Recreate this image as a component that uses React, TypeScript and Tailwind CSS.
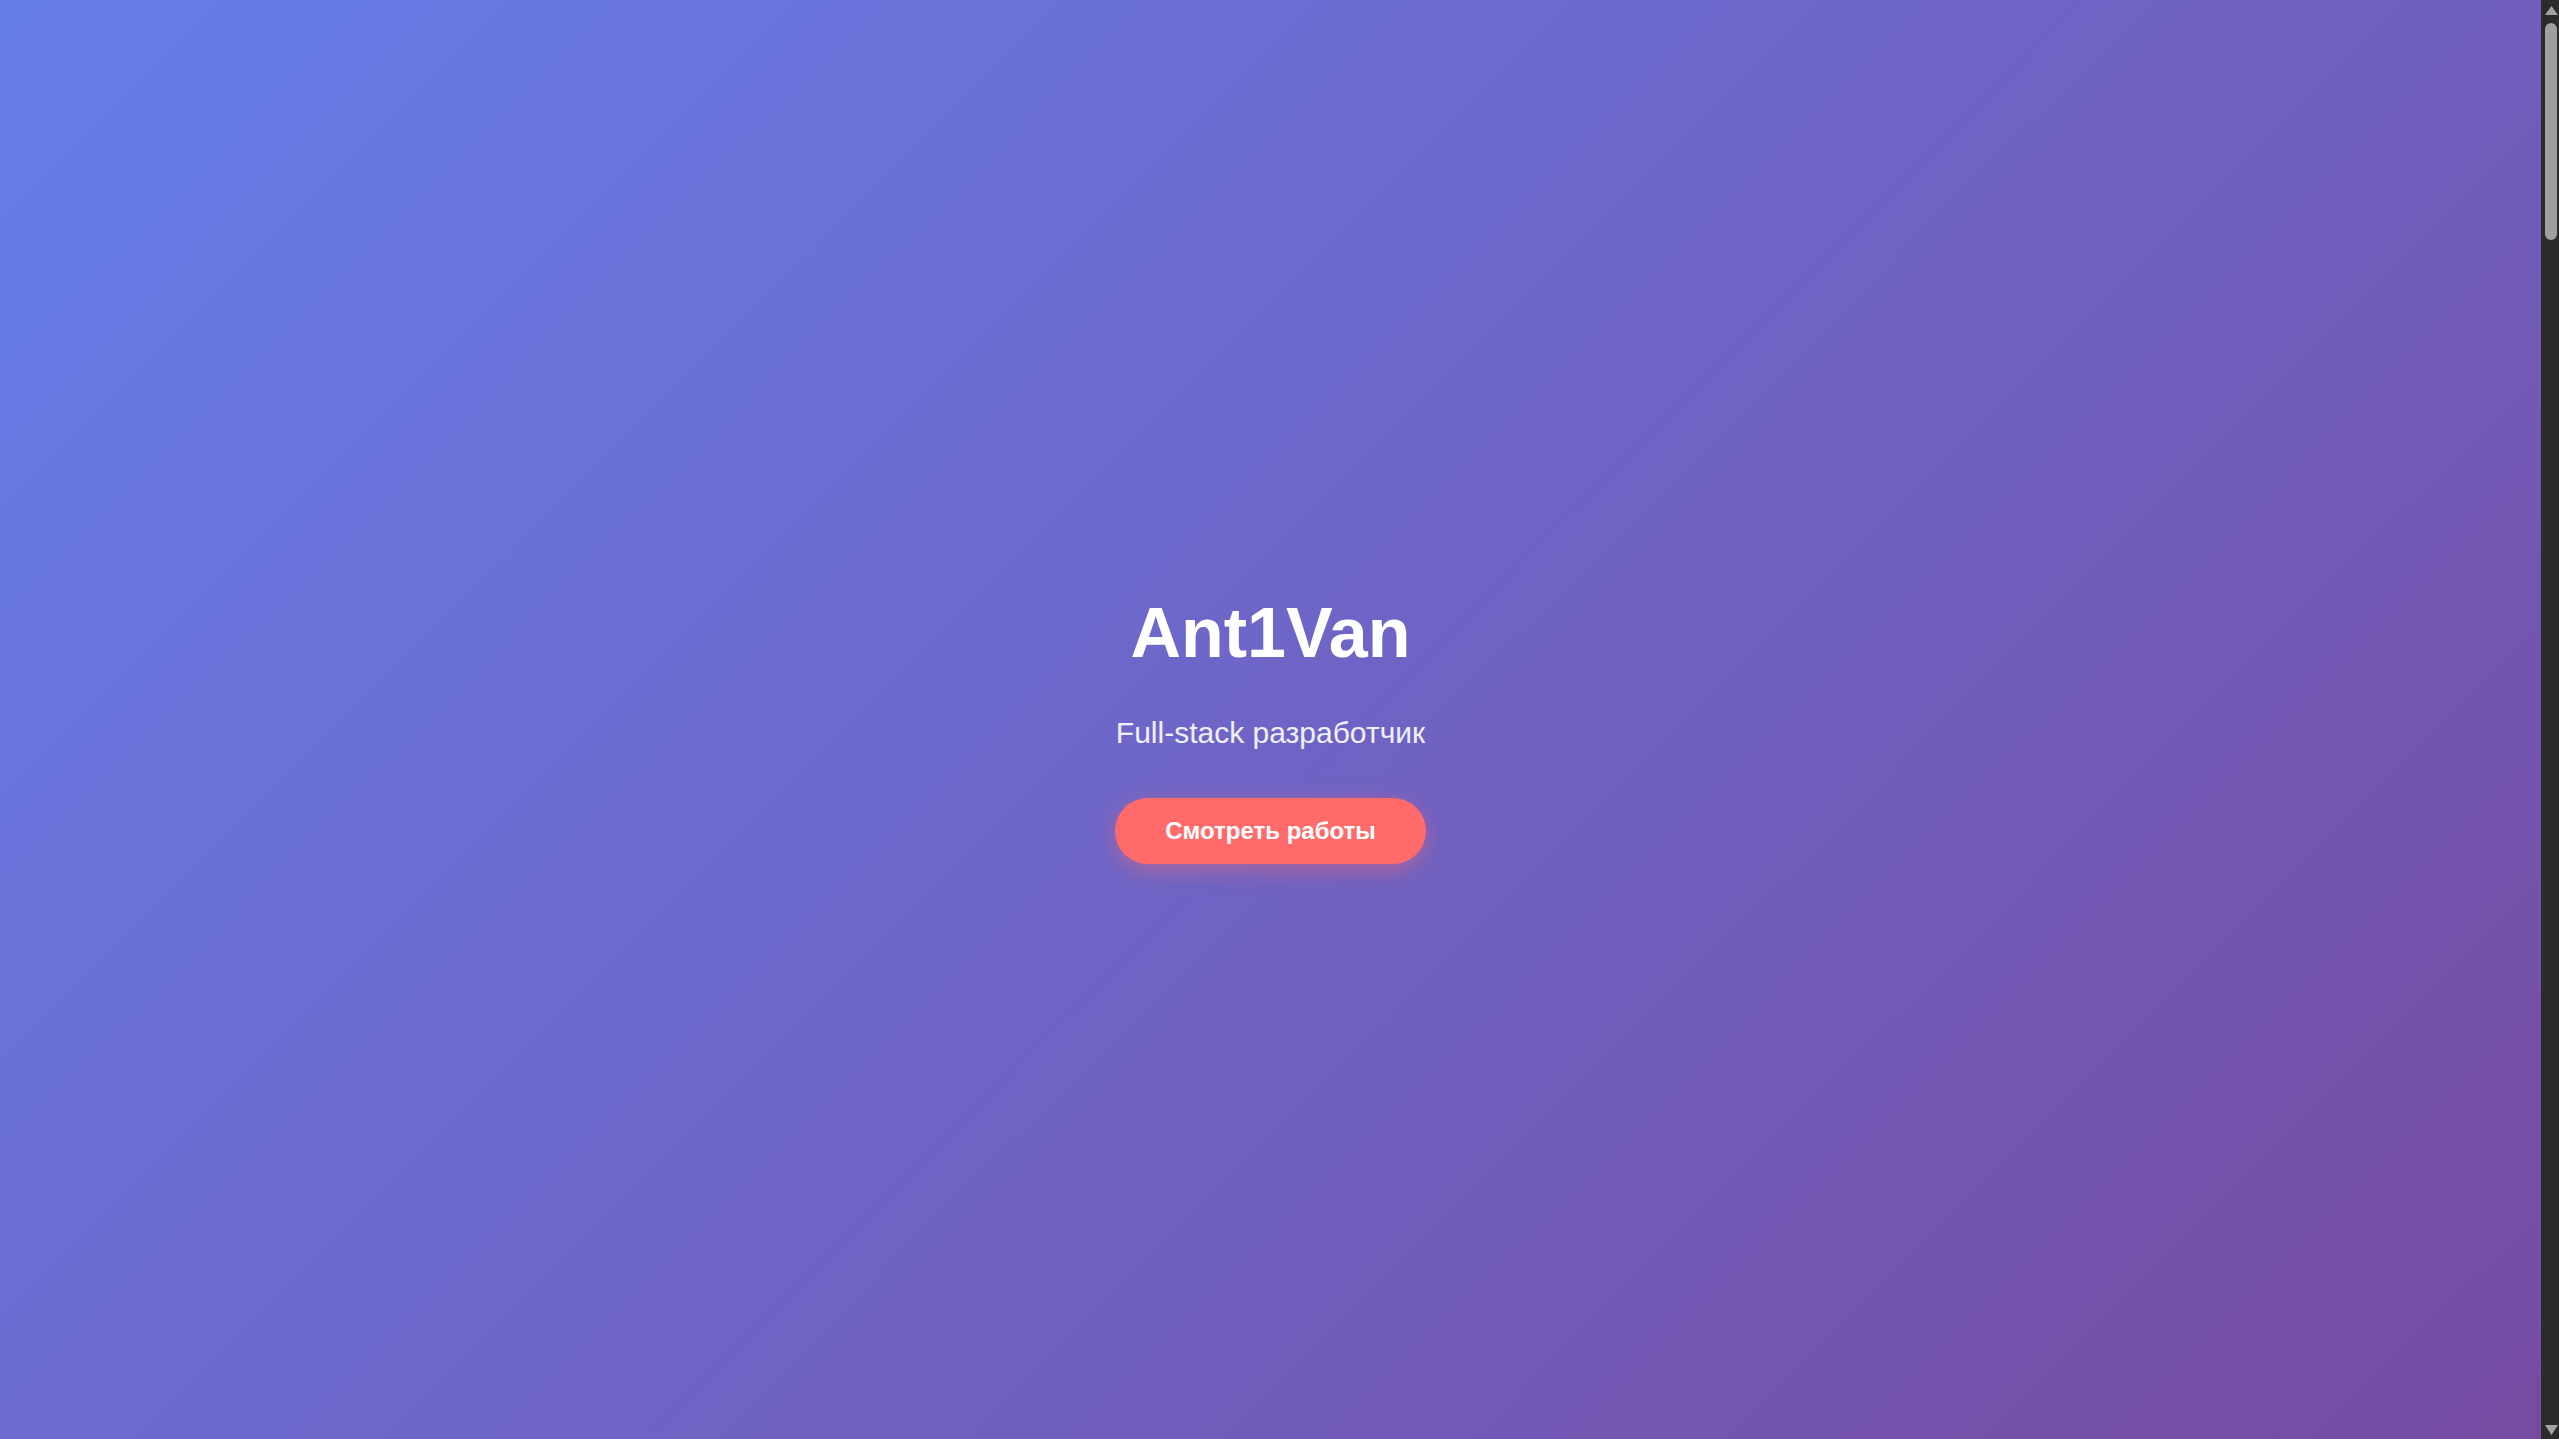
const App = () => {
    return (
        <div className="flex h-screen overflow-hidden font-['Liberation_Sans',Arial,sans-serif]">
            {/* HERO */}
            <section className="flex flex-1 flex-col items-center justify-center bg-[linear-gradient(135deg,#667eea_0%,#764ba2_100%)] pt-[18px] text-center text-white">
                <h1 className="mb-[42px] text-[70px] font-bold leading-[1.15]">Ant1Van</h1>
                <p className="mb-[48px] text-[30px] leading-[1.15] text-white/90">Full-stack разработчик</p>
                <a
                    href="#projects"
                    className="rounded-full bg-[#ff6b6b] px-[50px] py-[19px] text-[24px] font-bold leading-[1.15] text-white shadow-[0_6px_22px_rgba(255,107,107,0.45)]"
                >
                    Смотреть работы
                </a>
            </section>

            {/* SCROLLBAR (dark scheme) */}
            <aside className="flex w-[18px] flex-col bg-[#2b2b2b]">
                <div className="flex h-[17px] items-start justify-center pt-[6px] pl-[2px]">
                    <svg width="13" height="9" viewBox="0 0 13 9">
                        <polygon points="6.5,0 13,9 0,9" fill="#a3a3a3" />
                    </svg>
                </div>
                <div className="ml-[4px] mt-[6px] h-[217px] w-[12px] rounded-full bg-[#9f9f9f]" />
                <div className="flex-1" />
                <div className="flex h-[18px] items-start justify-center pt-[4px] pl-[2px]">
                    <svg width="13" height="10" viewBox="0 0 13 10">
                        <polygon points="0,0 13,0 6.5,10" fill="#a3a3a3" />
                    </svg>
                </div>
            </aside>
        </div>
    );
};

export default App;
